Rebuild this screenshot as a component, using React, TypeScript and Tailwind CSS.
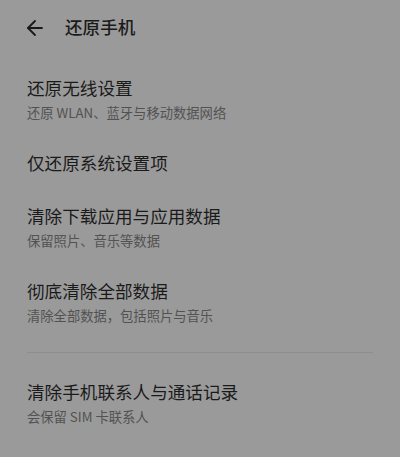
import { ArrowLeft } from 'lucide-react';

const groupA = [
    { title: '还原无线设置', desc: '还原 WLAN、蓝牙与移动数据网络' },
    { title: '仅还原系统设置项' },
    { title: '清除下载应用与应用数据', desc: '保留照片、音乐等数据' },
    { title: '彻底清除全部数据', desc: '清除全部数据，包括照片与音乐' },
];

const groupB = [
    { title: '清除手机联系人与通话记录', desc: '会保留 SIM 卡联系人' },
    { title: '清除手机短信与彩信记录', desc: '会保留 SIM 卡短信' },
];

function Row({ title, desc }: { title: string; desc?: string }) {
    return (
        <div className="flex flex-col">
            <div className="text-[17.6px] leading-[24px] text-[#1a1a1a]">{title}</div>
            {desc && (
                <div className="mt-[4px] text-[13.3px] leading-[18px] text-[#525252]">{desc}</div>
            )}
        </div>
    );
}

export default function App() {
    return (
        <div className="h-[457px] w-[400px] overflow-hidden bg-[#9a9a9a] font-['Noto_Sans_CJK_SC','Noto_Sans',sans-serif]">
            {/* Header */}
            <div className="flex h-[56px] items-center pl-[23px] pb-[1px]">
                <ArrowLeft size={24} strokeWidth={1.8} className="text-[#1a1a1a]" />
                <div className="ml-[18px] text-[17.6px] font-medium text-[#1a1a1a]">还原手机</div>
            </div>

            <div className="flex flex-col gap-[29px] px-[27px] pt-[20px]">
                {groupA.map((r) => (
                    <Row key={r.title} {...r} />
                ))}
            </div>

            <div className="mx-[27px] mt-[27px] mb-[27px] h-px bg-[#8e8e8e]" />

            <div className="flex flex-col gap-[29px] px-[27px]">
                {groupB.map((r) => (
                    <Row key={r.title} {...r} />
                ))}
            </div>
        </div>
    );
}
